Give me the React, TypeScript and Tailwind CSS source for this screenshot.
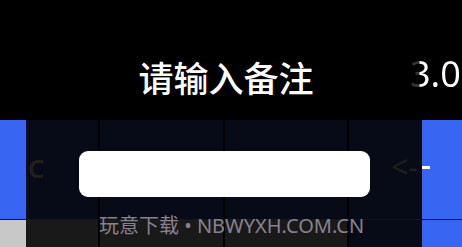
import React from 'react';

const font = { fontFamily: '"Noto Sans", "Noto Sans CJK SC", sans-serif' };

export default function App() {
  return (
    <div className="relative w-[462px] h-[247px] overflow-hidden bg-black" style={font}>
      {/* top display */}
      <div className="relative h-[120px] flex items-center justify-center">
        <div className="text-[35px] leading-none font-medium text-white mt-[36px] ml-[-10px]">请输入备注</div>
        <div className="absolute left-[410px] top-[56px] text-[36px] leading-none whitespace-nowrap bg-[linear-gradient(90deg,#333_0px,#333_9px,#fff_10px,#fff_100%)] bg-clip-text text-transparent">
          3.0
        </div>
      </div>

      {/* keypad row */}
      <div className="flex h-[99px]">
        <div className="w-[26px] bg-[#3866f2]" />
        <div className="w-[74px] bg-[#070b18] border-r-2 border-black flex items-center pl-[2px]">
          <span className="text-[26px] leading-none font-semibold text-[#221f1b] mt-[-4px]">C</span>
        </div>
        <div className="w-[125px] bg-[#070b18] border-r-2 border-black" />
        <div className="w-[124px] bg-[#070b18] border-r-2 border-black" />
        <div className="w-[73px] bg-[#070b18] flex items-center pl-[42px]">
          <span className="text-[30px] leading-none text-[#221f1b] mt-[-5px]">&lt;-</span>
        </div>
        <div className="flex-1 bg-[#3866f2] flex items-center">
          <div className="w-[8px] h-[3px] bg-white mt-[-4px]" />
        </div>
      </div>

      {/* bottom row */}
      <div className="flex h-[28px] border-t border-[#101522]">
        <div className="w-[26px] bg-[#c8c8c8]" />
        <div className="w-[74px] bg-[#191919] border-r-2 border-black" />
        <div className="w-[125px] bg-[#191919] border-r-2 border-black" />
        <div className="w-[124px] bg-[#191919] border-r-2 border-black" />
        <div className="w-[73px] bg-[#070b18]" />
        <div className="flex-1 bg-[#3866f2]" />
      </div>

      {/* input box */}
      <div className="absolute left-[79px] top-[151px] w-[291px] h-[46px] rounded-[9px] bg-white" />

      {/* watermark */}
      <div className="absolute left-[99px] top-[212px] text-[20px] leading-[28px] text-[#8a8190] whitespace-nowrap">
        玩意下载 • NBWYXH.COM.CN
      </div>
    </div>
  );
}
